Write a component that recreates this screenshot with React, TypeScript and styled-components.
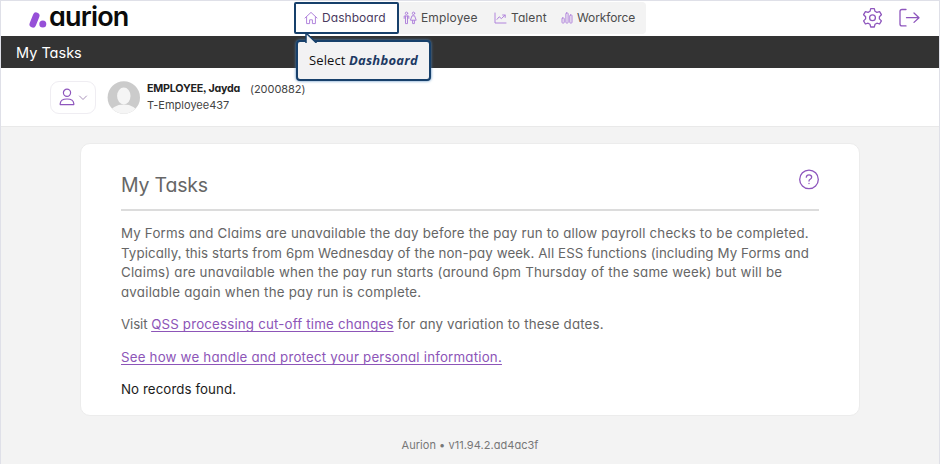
import React from 'react';
import styled, { createGlobalStyle } from 'styled-components';

const GlobalStyle = createGlobalStyle`
  * { box-sizing: border-box; }
  body { margin: 0; background: #f3f3f3; overflow: hidden; }
`;

const Page = styled.div`
  width: 940px;
  height: 464px;
  display: flex;
  flex-direction: column;
  background: #f3f3f3;
  border: 1px solid #dfe0e8;
  border-bottom: 0;
  font-family: Inter, 'Liberation Sans', sans-serif;
  font-feature-settings: 'cv11', 'ss03';
  color: #5b5b5b;
`;

const Text = styled.span<{ $ls?: number }>`
  white-space: pre;
  letter-spacing: ${(p) => p.$ls ?? 0}px;
`;

const Header = styled.header`
  height: 35px;
  flex: none;
  display: flex;
  align-items: flex-start;
  background: #fff;
`;

const Brand = styled.div`
  width: 293px;
  height: 35px;
  padding-left: 27px;
  display: flex;
  align-items: center;
`;

const Wordmark = styled.span`
  margin-left: 1px;
  padding-bottom: 3px;
  font-size: 27px;
  font-weight: 600;
  line-height: 32px;
  letter-spacing: -0.8px;
  color: #0b0b0b;
`;

const Nav = styled.nav`
  position: relative;
  width: 352px;
  height: 32px;
  margin-top: 1px;
  display: flex;
  align-items: center;
  background: #f3f3f3;
  border-radius: 0 4px 4px 0;
`;

const NavItem = styled.a<{ $width: number; $active?: boolean }>`
  width: ${(p) => p.$width}px;
  height: 32px;
  flex: none;
  display: flex;
  align-items: center;
  gap: 4px;
  padding-left: ${(p) => (p.$active ? 8 : 4)}px;
  padding-bottom: 1px;
  font-size: 12px;
  color: ${(p) => (p.$active ? '#4a3a60' : '#4c4c4c')};
  background: ${(p) => (p.$active ? '#fff' : 'transparent')};
  border: ${(p) => (p.$active ? '2px solid #17406b' : '0')};
  border-radius: 2px;
`;

const Actions = styled.div`
  margin-left: auto;
  padding: 6px 19px 0 0;
  display: flex;
  gap: 15px;
`;

const Callout = styled.div`
  position: absolute;
  left: 2px;
  top: 38px;
  z-index: 2;
  width: 135px;
  height: 41px;
  padding: 0 0 2px 11px;
  display: flex;
  align-items: center;
  font: 13px 'Open Sans', sans-serif;
  font-feature-settings: normal;
  color: #111;
  background: #f2f2f3;
  border: 2px solid #17406b;
  border-radius: 4px;
  box-shadow: 0 0 3px #4e86bd;
`;

const Pointer = styled.svg`
  position: absolute;
  left: 7px;
  top: -10px;
`;

const Strong = styled.b`
  font-style: italic;
  color: #1d3a63;
  letter-spacing: 0.24px;
`;

const TitleBar = styled.div`
  height: 32px;
  flex: none;
  display: flex;
  align-items: center;
  padding-left: 15px;
  background: #333;
  color: #fff;
  font-size: 14.5px;
`;

const Profile = styled.section`
  height: 59px;
  flex: none;
  display: flex;
  align-items: flex-start;
  padding: 13px 0 0 49px;
  background: #fff;
  border-bottom: 1px solid #e9e9e9;
`;

const UserButton = styled.div`
  width: 46px;
  height: 33px;
  margin-right: 11px;
  padding: 0 0 2px 8px;
  display: flex;
  align-items: center;
  gap: 3px;
  border: 1px solid #efedf2;
  border-radius: 9px;
`;

const Identity = styled.div`
  margin: 0 0 0 7px;
  display: flex;
  flex-direction: column;
  font-size: 11px;
  line-height: 16px;
  color: #444;
`;

const IdentityRow = styled.div`
  display: flex;
  gap: 9px;
`;

const Name = styled.b`
  width: 94px;
  font-size: 10.7px;
  color: #222;
  letter-spacing: -0.2px;
  white-space: nowrap;
`;

const Card = styled.main`
  width: 780px;
  height: 273px;
  flex: none;
  margin: 16px 0 0 79px;
  padding: 24px 40px 0;
  background: #fff;
  border: 1px solid #ececec;
  border-radius: 10px;
`;

const CardHead = styled.div`
  height: 43px;
  display: flex;
  justify-content: space-between;
  align-items: flex-start;
  border-bottom: 2px solid #dcdcdc;
`;

const Help = styled.div`
  margin-right: -1px;
`;

const Heading = styled.h1`
  margin: 5px 0 0;
  font-size: 19.5px;
  font-weight: 400;
  line-height: 24px;
  color: #666;
`;

const Paragraph = styled.p<{ $dark?: boolean }>`
  margin: 0 0 13px;
  display: flex;
  flex-direction: column;
  font-size: 13.3px;
  line-height: 19.5px;
  color: ${(p) => (p.$dark ? '#1c1c1c' : '#666')};
`;

const Body = styled.div`
  padding-top: 13px;
`;

const Inline = styled.span`
  display: flex;
`;

const Link = styled.a<{ $ls: number }>`
  align-self: flex-start;
  color: #8d55b8;
  text-decoration: underline;
  text-decoration-skip-ink: none;
  text-decoration-thickness: 1px;
  text-underline-offset: 2px;
  white-space: pre;
  letter-spacing: ${(p) => p.$ls}px;
`;

const Footer = styled.footer`
  margin-top: 22px;
  display: flex;
  justify-content: center;
  font-size: 11px;
  line-height: 15px;
  color: #777;
`;

const Icon = styled.svg<{ $color?: string }>`
  display: block;
  flex: none;
  fill: none;
  stroke: ${(p) => p.$color ?? '#8e56bd'};
  stroke-linecap: round;
  stroke-linejoin: round;
`;

const LogoMark = () => (
  <svg width="20" height="24" viewBox="0 0 20 24">
    <path d="M4.8 17.3 8.2 8.7" stroke="#9650d8" strokeWidth="6.6" strokeLinecap="round" />
    <circle cx="14.8" cy="17" r="3.5" fill="#9650d8" />
  </svg>
);

const lilac = '#b184dc';

const HomeIcon = () => (
  <Icon $color={lilac} width="14" height="14" viewBox="0 0 14 14">
    <path d="M1 7 7 1.4 13 7M2.6 6v6.6h3V8.8h2.8v3.8h3V6" />
  </Icon>
);

const PeopleIcon = () => (
  <Icon $color={lilac} width="14" height="14" viewBox="0 0 14 14">
    <circle cx="3.5" cy="2.3" r="1.2" />
    <path d="M1.2 7.4V5h4.6v2.4M2.5 5v7.6h2V5" />
    <circle cx="10.5" cy="2.3" r="1.2" />
    <path d="M9.4 4.8h2.2l1.6 4.4H7.8zM9.6 9.4v3.2h1.8V9.4" />
  </Icon>
);

const TrendIcon = () => (
  <Icon $color={lilac} width="13" height="14" viewBox="0 0 13 14">
    <path d="M1 2v10h11M3 8.4l2.2-2.6 2.2 1.8 3.6-3.4M8.6 4h2.6v2.4" />
  </Icon>
);

const BarsIcon = () => (
  <Icon $color={lilac} width="12" height="14" viewBox="0 0 12 14">
    <rect x="1" y="7" width="2.2" height="5" rx=".6" />
    <rect x="4.9" y="2" width="2.2" height="10" rx=".6" />
    <rect x="8.8" y="4" width="2.2" height="8" rx=".6" />
  </Icon>
);

const GearIcon = () => (
  <Icon width="21" height="22" viewBox="0 0 21 22" strokeWidth="1.3">
    <path d="M8.7 1.6h3.6l.7 2.7 1.9 1.1 2.7-.8 1.8 3.1-2 2v2.2l2 2-1.8 3.1-2.7-.8-1.9 1.1-.7 2.7H8.7L8 17.3l-1.9-1.1-2.7.8-1.8-3.1 2-2V9.7l-2-2 1.8-3.1 2.7.8L8 4.3z" />
    <circle cx="10.5" cy="10.8" r="2.9" />
  </Icon>
);

const LogoutIcon = () => (
  <Icon width="22" height="22" viewBox="0 0 22 22" strokeWidth="1.3">
    <path d="M8 2.5H4Q2 2.5 2 4.5v12.4q0 2 2 2h4M8.5 10.7H21M16 6l5 4.7-5 4.7" />
  </Icon>
);

const UserIcon = () => (
  <Icon width="16" height="18" viewBox="0 0 16 18" strokeWidth="1.2">
    <circle cx="8" cy="4.8" r="3.6" />
    <path d="M1.2 16.6v-1Q1.5 11 8 11t6.8 4.6v1z" />
  </Icon>
);

const ChevronIcon = () => (
  <Icon $color="#a992bb" width="10" height="8" viewBox="0 0 10 6">
    <path d="M1.5 2 5 5.5 8.5 2" />
  </Icon>
);

const Avatar = () => (
  <svg width="33" height="33" viewBox="0 0 33 33">
    <defs>
      <clipPath id="avatar">
        <circle cx="16.8" cy="16.5" r="16.2" />
      </clipPath>
    </defs>
    <g clipPath="url(#avatar)">
      <rect width="33" height="33" fill="#cbcbcb" />
      <ellipse cx="16.8" cy="32" rx="13.5" ry="8.5" fill="#f5f5f5" />
      <ellipse cx="16.8" cy="15" rx="6.7" ry="8.5" fill="#f5f5f5" />
    </g>
  </svg>
);

const HelpIcon = () => (
  <Icon width="22" height="22" viewBox="0 0 22 22" strokeWidth="1.3">
    <circle cx="11" cy="11.4" r="9.3" />
    <path d="M8.3 9.2Q8.5 6.9 11 6.9t2.7 2.2Q13.7 10.4 12.2 11.3 11 12 11 13.1M11 15.4v.2" />
  </Icon>
);

export default function App() {
  return (
    <>
      <GlobalStyle />
      <Page>
        <Header>
          <Brand><LogoMark /><Wordmark>aurion</Wordmark></Brand>
          <Nav>
            <NavItem $active $width={105}><HomeIcon /><Text $ls={0.06}>Dashboard</Text></NavItem>
            <NavItem $width={91}><PeopleIcon /><Text $ls={0.15}>Employee</Text></NavItem>
            <NavItem $width={67}><TrendIcon /><Text $ls={0.1}>Talent</Text></NavItem>
            <NavItem $width={85}><BarsIcon /><Text $ls={-0.12}>Workforce</Text></NavItem>
            <Callout>
              <Pointer width="14" height="11" viewBox="0 0 14 11">
                <path d="M1 11V1l10.5 10" fill="#f2f2f3" stroke="#17406b" strokeWidth="1.5" />
              </Pointer>
              <Text $ls={0.1}>Select </Text><Strong>Dashboard</Strong>
            </Callout>
          </Nav>
          <Actions><GearIcon /><LogoutIcon /></Actions>
        </Header>
        <TitleBar>My Tasks</TitleBar>
        <Profile>
          <UserButton><UserIcon /><ChevronIcon /></UserButton>
          <Avatar />
          <Identity>
            <IdentityRow><Name>EMPLOYEE, Jayda</Name><Text $ls={-0.05}>(2000882)</Text></IdentityRow>
            <Text>T-Employee437</Text>
          </Identity>
        </Profile>
        <Card>
          <CardHead><Heading><Text $ls={-0.2}>My Tasks</Text></Heading><Help><HelpIcon /></Help></CardHead>
          <Body>
            <Paragraph>
              <Text $ls={0.195}>My Forms and Claims are unavailable the day before the pay run to allow payroll checks to be completed.</Text>
              <Text $ls={0.1}>Typically, this starts from 6pm Wednesday of the non-pay week. All ESS functions (including My Forms and</Text>
              <Text $ls={0.22}>Claims) are unavailable when the pay run starts (around 6pm Thursday of the same week) but will be</Text>
              <Text $ls={0.23}>available again when the pay run is complete.</Text>
            </Paragraph>
            <Paragraph>
              <Inline>
                <Text $ls={-0.1}>Visit </Text>
                <Link $ls={0.185}>QSS processing cut-off time changes</Link>
                <Text $ls={0.16}> for any variation to these dates.</Text>
              </Inline>
            </Paragraph>
            <Paragraph>
              <Link $ls={0.2}>See how we handle and protect your personal information.</Link>
            </Paragraph>
            <Paragraph $dark><Text $ls={0.08}>No records found.</Text></Paragraph>
          </Body>
        </Card>
        <Footer><Text $ls={0.046}>Aurion • v11.94.2.ad4ac3f</Text></Footer>
      </Page>
    </>
  );
}
